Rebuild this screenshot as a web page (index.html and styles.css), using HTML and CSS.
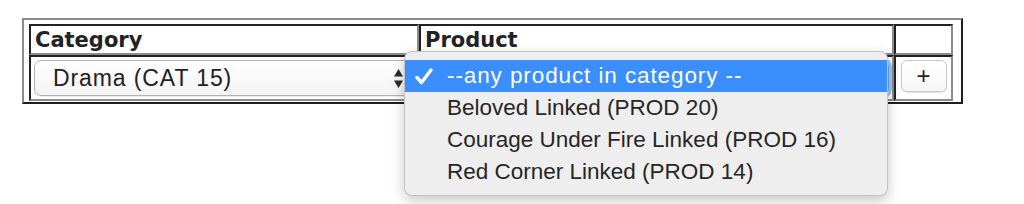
FILE: index.html
```html
<!DOCTYPE html>
<html lang="en">
<head>
    <meta charset="UTF-8">
    <meta name="viewport" content="width=device-width, initial-scale=1.0">
    <title>Linked Selects</title>
    <link rel="stylesheet" href="styles.css">
</head>
<body>
    <div class="page">
        <div class="frame">
            <table class="grid">
                <tr>
                    <th class="col-cat">Category</th>
                    <th class="col-prod">Product</th>
                    <th class="col-add"></th>
                </tr>
                <tr>
                    <td>
                        <div class="select">
                            <span class="select-text">Drama (CAT 15)</span>
                            <svg class="arrows" width="9" height="19" viewBox="0 0 9 19">
                                <path d="M4.5 0 L9 7.5 L0 7.5 Z" fill="#2a2a2a"/>
                                <path d="M0 11.5 L9 11.5 L4.5 19 Z" fill="#2a2a2a"/>
                            </svg>
                        </div>
                    </td>
                    <td>
                        <div class="select focused"></div>
                    </td>
                    <td>
                        <button type="button" class="add">+</button>
                    </td>
                </tr>
            </table>
        </div>

        <!-- open product dropdown -->
        <div class="menu">
            <div class="item selected">
                <svg class="check" width="18" height="17" viewBox="0 0 18 17">
                    <path d="M2 9.5 L6.5 14.5 L16 2" fill="none" stroke="#fff" stroke-width="3.4" stroke-linecap="round" stroke-linejoin="round"/>
                </svg>
                --any product in category --
            </div>
            <div class="item">Beloved Linked (PROD 20)</div>
            <div class="item">Courage Under Fire Linked (PROD 16)</div>
            <div class="item">Red Corner Linked (PROD 14)</div>
        </div>

        <h2 class="heading">Default list of linked titles in the shop</h2>
    </div>
</body>
</html>
```

FILE: styles.css
```css
body {
    margin: 0;
    background: #fff;
    font-family: "Liberation Sans", Arial, sans-serif;
    color: #222;
    overflow: hidden;
}
.page {
    position: relative;
    padding: 18px 0 0 22px;
}
.frame {
    display: inline-block;
    border: 2px solid;
    border-color: #8c8c8c #1f1f1f #1f1f1f #8c8c8c;
    padding: 4px 8px 1px 5px;
}
.grid {
    border-collapse: separate;
    border-spacing: 0;
}
.grid th, .grid td {
    box-sizing: border-box;
    border: 2px solid;
    border-color: #222 #8c8c8c #8c8c8c #222;
}
.grid th {
    text-align: left;
    font-family: "DejaVu Sans", Verdana, sans-serif;
    font-weight: bold;
    font-size: 21px;
    line-height: 25px;
    padding: 2px 4px 0;
    height: 31px;
}
.col-cat { width: 390px; }
.col-prod { width: 475px; }
.col-add { width: 59px; }
.grid td {
    vertical-align: top;
    padding: 3px;
    height: 45px;
}
.select {
    box-sizing: border-box;
    height: 36px;
    display: flex;
    align-items: center;
    justify-content: space-between;
    padding: 0 10px 0 18px;
    border: 1px solid #b2b2b2;
    border-radius: 7px;
    background: linear-gradient(#ffffff, #f4f4f4);
    box-shadow: 0 1px 1px rgba(0, 0, 0, 0.08);
    font-size: 23px;
    letter-spacing: 0.9px;
    color: #222;
}
.select.focused {
    border-color: #6aa6f0;
    box-shadow: 0 0 0 3px rgba(80, 150, 240, 0.55);
}
.add {
    display: block;
    margin: 0 auto;
    width: 46px;
    height: 32px;
    padding: 0;
    border: 1px solid #c9c9c9;
    border-radius: 6px;
    background: linear-gradient(#ffffff, #f7f7f7);
    box-shadow: 0 1px 1px rgba(0, 0, 0, 0.12);
    font-family: "Liberation Sans", Arial, sans-serif;
    font-size: 24px;
    line-height: 28px;
    color: #222;
}
.menu {
    position: absolute;
    left: 404px;
    top: 51px;
    width: 484px;
    box-sizing: border-box;
    padding: 8px 0 7px;
    background: #eeeeee;
    border: 1px solid rgba(0, 0, 0, 0.18);
    border-radius: 8px;
    box-shadow: 0 5px 14px rgba(0, 0, 0, 0.22);
}
.item {
    position: relative;
    height: 32px;
    line-height: 32px;
    padding-left: 42px;
    font-size: 22.5px;
    color: #262626;
    white-space: nowrap;
}
.item.selected {
    background: #3a8efd;
    color: #fff;
    letter-spacing: 0.9px;
}
.check {
    position: absolute;
    left: 10px;
    top: 8px;
}
.heading {
    margin: 89px 0 0;
    padding-left: 128px;
    font-family: "DejaVu Sans", Verdana, sans-serif;
    font-size: 32px;
    line-height: 42px;
    font-weight: bold;
    color: #111;
}
```
